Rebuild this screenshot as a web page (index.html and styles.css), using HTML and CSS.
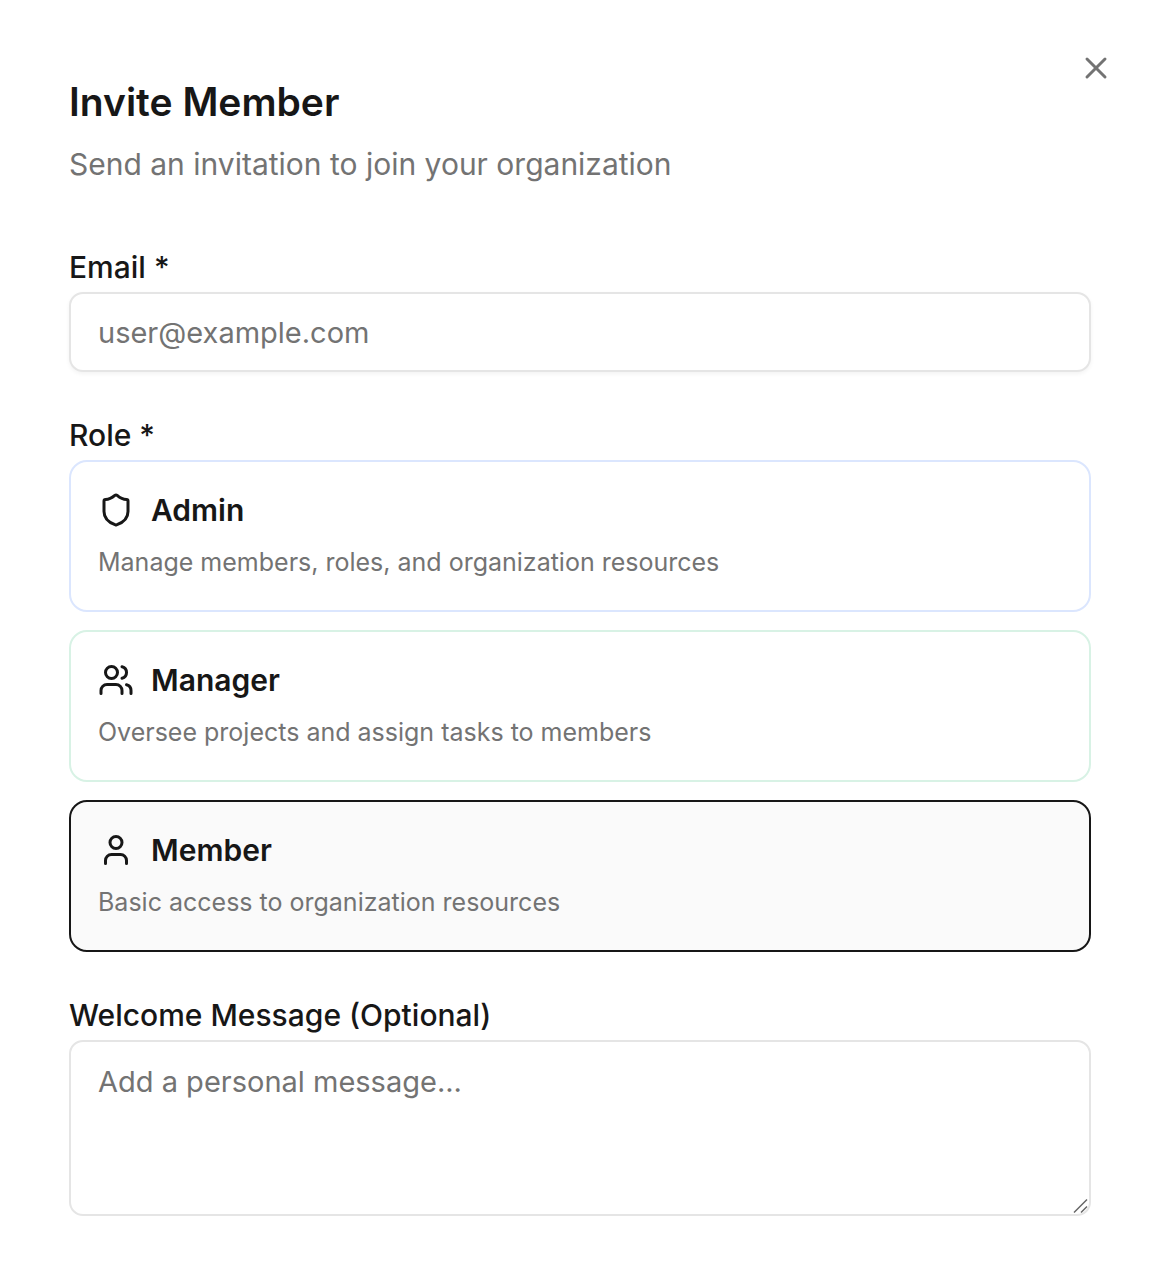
FILE: index.html
```html
<!DOCTYPE html>
<html lang="en">
<head>
    <meta charset="UTF-8">
    <meta name="viewport" content="width=device-width, initial-scale=1.0">
    <title>Invite Member</title>
    <link rel="stylesheet" href="styles.css">
</head>
<body>
    <main class="dialog">
        <button type="button" class="close-btn" aria-label="Close">
            <svg class="icon" viewBox="0 0 24 24"><path d="M18 6 6 18"/><path d="m6 6 12 12"/></svg>
        </button>

        <header class="dialog-header">
            <h1>Invite Member</h1>
            <p>Send an invitation to join your organization</p>
        </header>

        <form class="invite-form">
            <div class="field">
                <label class="field-label" for="email">Email *</label>
                <input class="text-input" type="email" id="email" placeholder="user@example.com" required>
            </div>

            <div class="field" role="radiogroup" aria-labelledby="role-label">
                <span class="field-label" id="role-label">Role *</span>
                <div class="roles">
                    <label class="role role-admin" for="role-admin">
                        <input type="radio" name="role" id="role-admin" value="admin">
                        <span class="role-title">
                            <svg class="icon" viewBox="0 0 24 24"><path d="M20 13c0 5-3.5 7.5-7.66 8.95a1 1 0 0 1-.67-.01C7.5 20.5 4 18 4 13V6a1 1 0 0 1 1-1c2 0 4.5-1.2 6.24-2.72a1.17 1.17 0 0 1 1.52 0C14.51 3.81 17 5 19 5a1 1 0 0 1 1 1z"/></svg>
                            Admin
                        </span>
                        <span class="role-text">Manage members, roles, and organization resources</span>
                    </label>
                    <label class="role role-manager" for="role-manager">
                        <input type="radio" name="role" id="role-manager" value="manager">
                        <span class="role-title">
                            <svg class="icon" viewBox="0 0 24 24"><path d="M16 21v-2a4 4 0 0 0-4-4H6a4 4 0 0 0-4 4v2"/><circle cx="9" cy="7" r="4"/><path d="M22 21v-2a4 4 0 0 0-3-3.87"/><path d="M16 3.13a4 4 0 0 1 0 7.75"/></svg>
                            Manager
                        </span>
                        <span class="role-text">Oversee projects and assign tasks to members</span>
                    </label>
                    <label class="role role-member" for="role-member">
                        <input type="radio" name="role" id="role-member" value="member" checked>
                        <span class="role-title">
                            <svg class="icon" viewBox="0 0 24 24"><path d="M19 21v-2a4 4 0 0 0-4-4H9a4 4 0 0 0-4 4v2"/><circle cx="12" cy="7" r="4"/></svg>
                            Member
                        </span>
                        <span class="role-text">Basic access to organization resources</span>
                    </label>
                </div>
            </div>

            <div class="field">
                <label class="field-label" for="message">Welcome Message (Optional)</label>
                <div class="message-box">
                    <textarea class="text-input" id="message" placeholder="Add a personal message..."></textarea>
                    <svg class="grip" viewBox="0 0 16 16"><path d="M1 14.5 14 1.5M8 14.5l6-6"/></svg>
                </div>
            </div>
        </form>
    </main>
</body>
</html>
```
FILE: styles.css
```css
* { box-sizing: border-box; }
body {
    margin: 0;
    background: #fff;
    color: #171717;
    font-family: Inter, "Liberation Sans", sans-serif;
}
.dialog {
    position: relative;
    padding: 82px 65px 68px 69px;
}
.icon {
    display: block;
    flex: none;
    width: 36px;
    height: 36px;
    fill: none;
    stroke: currentColor;
    stroke-width: 2;
    stroke-linecap: round;
    stroke-linejoin: round;
}
.close-btn {
    position: absolute;
    top: 50px;
    right: 42px;
    padding: 0;
    border: none;
    background: none;
    color: #737373;
    cursor: pointer;
}
.dialog-header {
    display: flex;
    flex-direction: column;
    gap: 20px;
    margin-bottom: 66px;
}
.dialog-header h1 {
    margin: 0;
    font-size: 39px;
    line-height: 40px;
    font-weight: 600;
}
.dialog-header p {
    margin: 0;
    color: #737373;
    font-size: 30px;
    line-height: 44px;
}
.invite-form {
    display: flex;
    flex-direction: column;
    gap: 48px;
}
.field {
    display: flex;
    flex-direction: column;
    gap: 10px;
}
.field-label {
    font-size: 30px;
    line-height: 30px;
    font-weight: 500;
}
.text-input {
    display: block;
    width: 100%;
    height: 80px;
    padding: 0 27px;
    border: 2px solid #e5e5e5;
    border-radius: 14px;
    background: #fff;
    color: #171717;
    font-family: inherit;
    font-size: 29px;
    line-height: 44px;
    box-shadow: 0 2px 4px rgba(0, 0, 0, 0.05);
}
.text-input::placeholder { color: #737373; opacity: 1; }
.message-box { position: relative; }
.message-box .text-input {
    height: 176px;
    padding: 18px 27px;
    resize: vertical;
    box-shadow: none;
}
.message-box .text-input::-webkit-resizer { background: transparent; }
.grip {
    position: absolute;
    right: 2px;
    bottom: 2px;
    width: 16px;
    height: 16px;
    fill: none;
    stroke: #666;
    stroke-width: 1.5;
    pointer-events: none;
}
.roles {
    display: flex;
    flex-direction: column;
    gap: 18px;
}
.role {
    position: relative;
    display: flex;
    flex-direction: column;
    gap: 16px;
    padding: 30px 27px;
    border: 2px solid #e5e5e5;
    border-radius: 18px;
    cursor: pointer;
}
.role input {
    position: absolute;
    margin: 0;
    opacity: 0;
}
.role-admin { border-color: #dbe6fe; }
.role-manager { border-color: #d8f2e5; }
.role:has(input:checked) {
    border-color: #171717;
    background: #fafafa;
}
.role-title {
    display: flex;
    align-items: center;
    gap: 17px;
    font-size: 30px;
    line-height: 36px;
    font-weight: 600;
}
.role-text {
    color: #737373;
    font-size: 25px;
    line-height: 36px;
}
```
